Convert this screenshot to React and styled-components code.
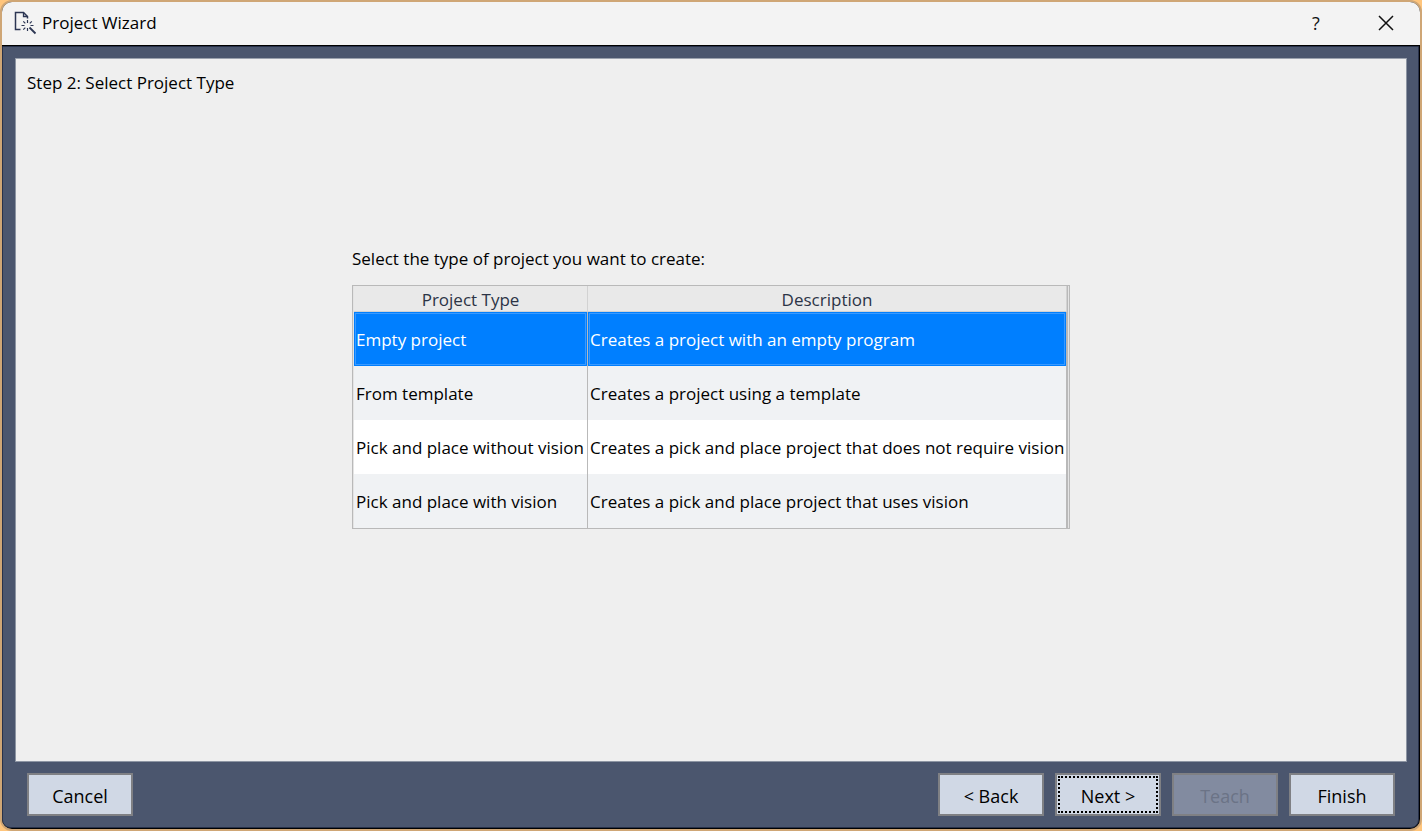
import React, { useState } from 'react';
import styled, { createGlobalStyle } from 'styled-components';

const GlobalStyle = createGlobalStyle`
  * {
    box-sizing: border-box;
  }

  body {
    margin: 0;
    background: #ffc57c;
    font-family: 'Open Sans', 'Noto Sans', sans-serif;
    font-size: 17px;
    line-height: 24px;
    color: #000000;
  }
`;

const WindowFrame = styled.div`
  display: flex;
  flex-direction: column;
  min-height: 100vh;
  border: 2px solid #cfa675;
  border-radius: 12px;
  overflow: hidden;
  background: #000000;
`;

const TitleBar = styled.header`
  display: flex;
  align-items: center;
  height: 43px;
  padding: 0 11px 2px 12px;
  background: #f3f3f3;
`;

const WindowTitle = styled.h1`
  flex: 1;
  margin: 0 0 0 5px;
  font-size: 17px;
  font-weight: 400;
  line-height: 24px;
`;

const TitleButton = styled.button`
  display: flex;
  justify-content: center;
  align-items: center;
  width: 46px;
  height: 40px;
  margin-left: 24px;
  padding: 0;
  border: none;
  background: transparent;
  color: #111111;
  font-family: inherit;
  font-size: 18px;
`;

const WindowBody = styled.main`
  flex: 1;
  display: flex;
  flex-direction: column;
  margin: 1px 1px 1px 0;
  padding: 11px 11px 0 12px;
  border: 1px solid #27314a;
  border-radius: 0 0 8px 8px;
  background: #4b566e;
`;

const Page = styled.section`
  flex: 1;
  padding: 12px 11px;
  border: 1px solid #8d95a3;
  border-top-color: #9aa1ad;
  background: #efefef;
`;

const StepTitle = styled.h2`
  margin: 0 0 152px;
  font-size: 17px;
  font-weight: 400;
  line-height: 24px;
`;

const TypeSelection = styled.div`
  width: fit-content;
  margin: 0 auto;
`;

const ProjectTable = styled.table`
  width: 718px;
  padding-left: 1px;
  table-layout: fixed;
  border: 1px solid #b9b9b9;
  border-right: 3px double #b9b9b9;
  border-spacing: 0;
  background: #e4e4e4;

  caption {
    padding-bottom: 14px;
    text-align: left;
  }
`;

const HeaderCell = styled.th`
  width: ${({ $width }) => $width || 'auto'};
  height: 26px;
  padding: 2px 0 0;
  border: solid #d2d2d2;
  border-width: 0 1px 1px 0;
  background: #e9e9e9;
  color: #2c3446;
  font-weight: 400;
  line-height: 22px;
`;

const Row = styled.tr`
  background: ${({ $selected }) => ($selected ? '#007fff' : '#ffffff')};
  color: ${({ $selected }) => ($selected ? '#ffffff' : '#000000')};
  cursor: default;

  &:nth-child(even) {
    background: ${({ $selected }) => ($selected ? '#007fff' : '#f0f2f4')};
  }

  td {
    height: 54px;
    padding: 2px 0 0 2px;
    border-right: 1px solid #b9b9b9;
    white-space: nowrap;
    box-shadow: ${({ $selected }) => ($selected
      ? 'inset 0 0 0 1px #007fff, inset 0 0 0 2px #3a9aff'
      : 'none')};
  }
`;

const ButtonBar = styled.footer`
  display: flex;
  gap: 11px;
  padding: 11px 12px;
`;

const WizardButton = styled.button`
  width: 106px;
  height: 43px;
  margin-right: ${({ $pushLeft }) => ($pushLeft ? 'auto' : '0')};
  padding: 2px 0 0;
  border: 2px solid #7f8084;
  background: #d0d8e5;
  color: #000000;
  font-family: inherit;
  font-size: 18px;
  line-height: 24px;
  outline: ${({ $focused }) => ($focused ? '2px dotted #000000' : 'none')};
  outline-offset: -5px;

  &:disabled {
    background: #828ba0;
    color: #6b7386;
  }
`;

const WizardIcon = () => (
  <svg width="23" height="24" viewBox="0 0 23 24" fill="none" stroke="#2c3653" aria-hidden="true">
    <path d="M6.5 18.5H1.5V1.5H9.5L13.5 5.5V7.5" strokeWidth="1.5" />
    <path d="M9.5 1.5V5.5H13.5" strokeWidth="1.3" />
    <path
      d="M13.5 9V12M13.5 17V20M7.5 14.5H10.5M16.5 14.5H19.5M9.3 10.3L11.3 12.3M17.8 10.3L15.8 12.3M9.3 18.7L11.3 16.7"
      strokeWidth="1.2"
    />
    <path d="M15.5 16.5L21.5 22.5" strokeWidth="1.8" />
  </svg>
);

const CloseIcon = () => (
  <svg width="16" height="16" viewBox="0 0 16 16" fill="none" stroke="currentColor" aria-hidden="true">
    <path d="M1 1L15 15M15 1L1 15" strokeWidth="1.5" />
  </svg>
);

const projectTypes = [
  { name: 'Empty project', description: 'Creates a project with an empty program' },
  { name: 'From template', description: 'Creates a project using a template' },
  {
    name: 'Pick and place without vision',
    description: 'Creates a pick and place project that does not require vision',
  },
  { name: 'Pick and place with vision', description: 'Creates a pick and place project that uses vision' },
];

const App = () => {
  const [selected, setSelected] = useState(0);

  return (
    <>
      <GlobalStyle />
      <WindowFrame>
        <TitleBar>
          <WizardIcon />
          <WindowTitle>Project Wizard</WindowTitle>
          <TitleButton type="button" aria-label="Help">?</TitleButton>
          <TitleButton type="button" aria-label="Close">
            <CloseIcon />
          </TitleButton>
        </TitleBar>

        <WindowBody>
          <Page>
            <StepTitle>Step 2: Select Project Type</StepTitle>
            <TypeSelection>
              <ProjectTable>
                <caption>Select the type of project you want to create:</caption>
                <thead>
                  <tr>
                    <HeaderCell $width="234px">Project Type</HeaderCell>
                    <HeaderCell>Description</HeaderCell>
                  </tr>
                </thead>
                <tbody>
                  {projectTypes.map((type, index) => (
                    <Row
                      key={type.name}
                      $selected={selected === index}
                      aria-selected={selected === index}
                      onClick={() => setSelected(index)}
                    >
                      <td>{type.name}</td>
                      <td>{type.description}</td>
                    </Row>
                  ))}
                </tbody>
              </ProjectTable>
            </TypeSelection>
          </Page>

          <ButtonBar>
            <WizardButton type="button" $pushLeft>Cancel</WizardButton>
            <WizardButton type="button">&lt; Back</WizardButton>
            <WizardButton type="button" $focused>Next &gt;</WizardButton>
            <WizardButton type="button" disabled>Teach</WizardButton>
            <WizardButton type="button">Finish</WizardButton>
          </ButtonBar>
        </WindowBody>
      </WindowFrame>
    </>
  );
};

export default App;
